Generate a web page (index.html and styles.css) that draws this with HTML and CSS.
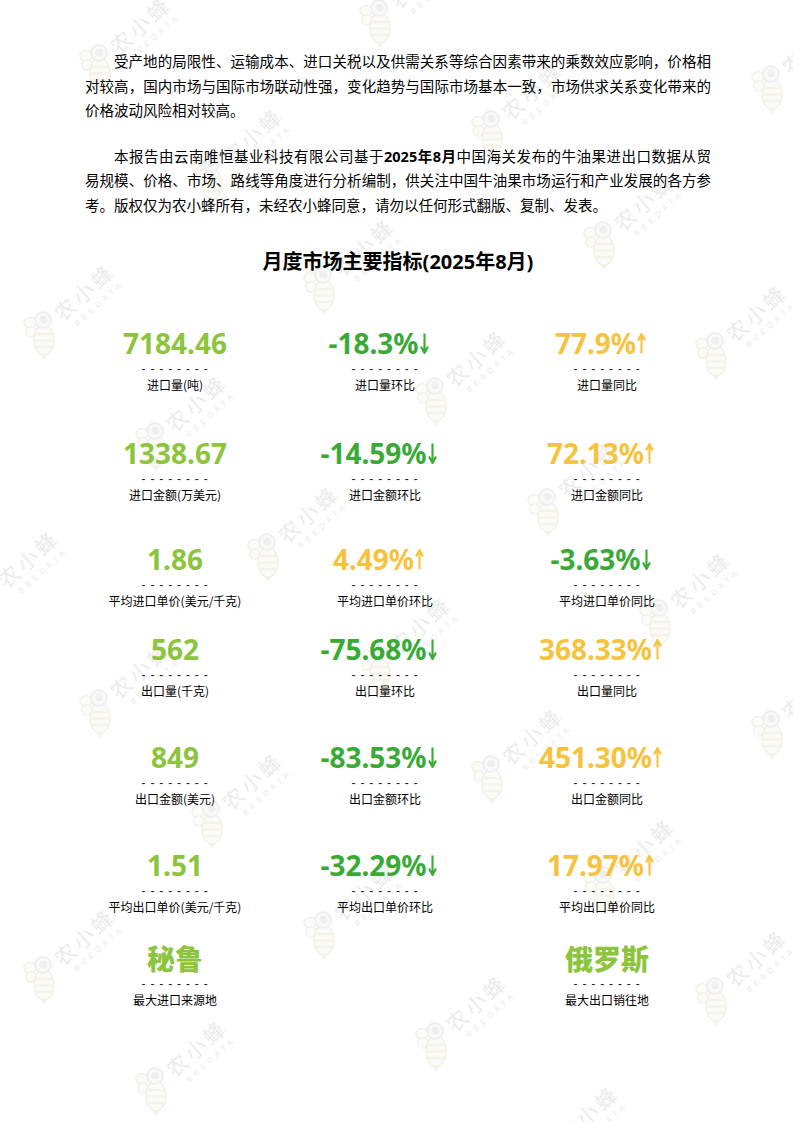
FILE: index.html
```html
<!DOCTYPE html>
<html lang="zh-CN">
<head>
<meta charset="utf-8">
<title>月度市场主要指标</title>
<link rel="stylesheet" href="styles.css">
</head>
<body>
<div class="page">
  <svg class="defs" width="0" height="0" aria-hidden="true">
    <defs>
      <symbol id="bee" viewBox="-20 -12 40 56">
        <ellipse cx="-13" cy="3" rx="6" ry="5.5" fill="#fafaf6" stroke="#efede6" stroke-width="1.5"/>
        <ellipse cx="-12" cy="12" rx="5.5" ry="5" fill="#fafaf6" stroke="#efede6" stroke-width="1.5"/>
        <ellipse cx="1" cy="20" rx="10" ry="15" fill="#fbfaf5" stroke="#f0ece0" stroke-width="1.6"/>
        <path d="M-8 14H10M-9 20.5H11M-8 27H10" stroke="#f3efe2" stroke-width="2.4"/>
        <path d="M-2.5 34.5L1 40L4.5 34.5Z" fill="#f0ece0"/>
        <circle cx="0" cy="0" r="8" fill="#f7f7f7" stroke="#eaeaea" stroke-width="2"/>
        <circle cx="0.5" cy="-0.5" r="3.8" fill="#e9e9e9"/>
      </symbol>
      <symbol id="down" viewBox="0 0 9 21">
        <path d="M4.5 0.5V19.5M1 13.5L4.5 20L8 13.5" fill="none" stroke="currentColor" stroke-width="2.1"/>
      </symbol>
      <symbol id="up" viewBox="0 0 9 21">
        <path d="M4.5 20.5V1.5M1 7.5L4.5 1L8 7.5" fill="none" stroke="currentColor" stroke-width="2.1"/>
      </symbol>
    </defs>
  </svg>

  <div class="watermarks" aria-hidden="true">
    <div class="wm w1"><svg class="bee"><use href="#bee"/></svg><div class="wm-t"><span class="wm-cn">农小蜂</span><span class="wm-en">BEEDATA</span></div></div>
    <div class="wm w2"><svg class="bee"><use href="#bee"/></svg><div class="wm-t"><span class="wm-cn">农小蜂</span><span class="wm-en">BEEDATA</span></div></div>
    <div class="wm w3"><svg class="bee"><use href="#bee"/></svg><div class="wm-t"><span class="wm-cn">农小蜂</span><span class="wm-en">BEEDATA</span></div></div>
    <div class="wm w4"><svg class="bee"><use href="#bee"/></svg><div class="wm-t"><span class="wm-cn">农小蜂</span><span class="wm-en">BEEDATA</span></div></div>
    <div class="wm w5"><svg class="bee"><use href="#bee"/></svg><div class="wm-t"><span class="wm-cn">农小蜂</span><span class="wm-en">BEEDATA</span></div></div>
    <div class="wm w7"><svg class="bee"><use href="#bee"/></svg><div class="wm-t"><span class="wm-cn">农小蜂</span><span class="wm-en">BEEDATA</span></div></div>
    <div class="wm w8"><svg class="bee"><use href="#bee"/></svg><div class="wm-t"><span class="wm-cn">农小蜂</span><span class="wm-en">BEEDATA</span></div></div>
    <div class="wm w9"><svg class="bee"><use href="#bee"/></svg><div class="wm-t"><span class="wm-cn">农小蜂</span><span class="wm-en">BEEDATA</span></div></div>
    <div class="wm w10"><svg class="bee"><use href="#bee"/></svg><div class="wm-t"><span class="wm-cn">农小蜂</span><span class="wm-en">BEEDATA</span></div></div>
    <div class="wm w11"><svg class="bee"><use href="#bee"/></svg><div class="wm-t"><span class="wm-cn">农小蜂</span><span class="wm-en">BEEDATA</span></div></div>
    <div class="wm w12"><svg class="bee"><use href="#bee"/></svg><div class="wm-t"><span class="wm-cn">农小蜂</span><span class="wm-en">BEEDATA</span></div></div>
    <div class="wm w13"><svg class="bee"><use href="#bee"/></svg><div class="wm-t"><span class="wm-cn">农小蜂</span><span class="wm-en">BEEDATA</span></div></div>
    <div class="wm w14"><svg class="bee"><use href="#bee"/></svg><div class="wm-t"><span class="wm-cn">农小蜂</span><span class="wm-en">BEEDATA</span></div></div>
    <div class="wm w15"><svg class="bee"><use href="#bee"/></svg><div class="wm-t"><span class="wm-cn">农小蜂</span><span class="wm-en">BEEDATA</span></div></div>
    <div class="wm w16"><svg class="bee"><use href="#bee"/></svg><div class="wm-t"><span class="wm-cn">农小蜂</span><span class="wm-en">BEEDATA</span></div></div>
    <div class="wm w17"><svg class="bee"><use href="#bee"/></svg><div class="wm-t"><span class="wm-cn">农小蜂</span><span class="wm-en">BEEDATA</span></div></div>
    <div class="wm w18"><svg class="bee"><use href="#bee"/></svg><div class="wm-t"><span class="wm-cn">农小蜂</span><span class="wm-en">BEEDATA</span></div></div>
    <div class="wm w19"><svg class="bee"><use href="#bee"/></svg><div class="wm-t"><span class="wm-cn">农小蜂</span><span class="wm-en">BEEDATA</span></div></div>
    <div class="wm w20"><svg class="bee"><use href="#bee"/></svg><div class="wm-t"><span class="wm-cn">农小蜂</span><span class="wm-en">BEEDATA</span></div></div>
    <div class="wm w21"><svg class="bee"><use href="#bee"/></svg><div class="wm-t"><span class="wm-cn">农小蜂</span><span class="wm-en">BEEDATA</span></div></div>
    <div class="wm w23"><svg class="bee"><use href="#bee"/></svg><div class="wm-t"><span class="wm-cn">农小蜂</span><span class="wm-en">BEEDATA</span></div></div>
    <div class="wm w24"><svg class="bee"><use href="#bee"/></svg><div class="wm-t"><span class="wm-cn">农小蜂</span><span class="wm-en">BEEDATA</span></div></div>
    <div class="wm w25"><svg class="bee"><use href="#bee"/></svg><div class="wm-t"><span class="wm-cn">农小蜂</span><span class="wm-en">BEEDATA</span></div></div>
    <div class="wm w26"><svg class="bee"><use href="#bee"/></svg><div class="wm-t"><span class="wm-cn">农小蜂</span><span class="wm-en">BEEDATA</span></div></div>
    <div class="wm w27"><svg class="bee"><use href="#bee"/></svg><div class="wm-t"><span class="wm-cn">农小蜂</span><span class="wm-en">BEEDATA</span></div></div>
    <div class="wm w28"><svg class="bee"><use href="#bee"/></svg><div class="wm-t"><span class="wm-cn">农小蜂</span><span class="wm-en">BEEDATA</span></div></div>
    <div class="wm w29"><svg class="bee"><use href="#bee"/></svg><div class="wm-t"><span class="wm-cn">农小蜂</span><span class="wm-en">BEEDATA</span></div></div>
  </div>

  <main class="content">
    <p class="para">
      <span class="ln ln-first">受产地的局限性、运输成本、进口关税以及供需关系等综合因素带来的乘数效应影响，价格相</span>
      <span class="ln">对较高，国内市场与国际市场联动性强，变化趋势与国际市场基本一致，市场供求关系变化带来的</span>
      <span class="ln ln-last">价格波动风险相对较高。</span>
    </p>
    <p class="para">
      <span class="ln ln-first">本报告由云南唯恒基业科技有限公司基于<b>2025年8月</b>中国海关发布的牛油果进出口数据从贸</span>
      <span class="ln">易规模、价格、市场、路线等角度进行分析编制，供关注中国牛油果市场运行和产业发展的各方参</span>
      <span class="ln ln-last">考。版权仅为农小蜂所有，未经农小蜂同意，请勿以任何形式翻版、复制、发表。</span>
    </p>

    <h2 class="title">月度市场主要指标(2025年8月)</h2>

    <section class="metrics">
      <div class="row r1">
        <div class="cell"><div class="val lime">7184.46</div><div class="dash">- - - - - - - -</div><div class="lab">进口量(吨)</div></div>
        <div class="cell"><div class="val green">-18.3%<svg class="arrow"><use href="#down"/></svg></div><div class="dash">- - - - - - - -</div><div class="lab">进口量环比</div></div>
        <div class="cell"><div class="val gold">77.9%<svg class="arrow"><use href="#up"/></svg></div><div class="dash">- - - - - - - -</div><div class="lab">进口量同比</div></div>
      </div>
      <div class="row r2">
        <div class="cell"><div class="val lime">1338.67</div><div class="dash">- - - - - - - -</div><div class="lab">进口金额(万美元)</div></div>
        <div class="cell"><div class="val green">-14.59%<svg class="arrow"><use href="#down"/></svg></div><div class="dash">- - - - - - - -</div><div class="lab">进口金额环比</div></div>
        <div class="cell"><div class="val gold">72.13%<svg class="arrow"><use href="#up"/></svg></div><div class="dash">- - - - - - - -</div><div class="lab">进口金额同比</div></div>
      </div>
      <div class="row r3">
        <div class="cell"><div class="val lime">1.86</div><div class="dash">- - - - - - - -</div><div class="lab">平均进口单价(美元/千克)</div></div>
        <div class="cell"><div class="val gold">4.49%<svg class="arrow"><use href="#up"/></svg></div><div class="dash">- - - - - - - -</div><div class="lab">平均进口单价环比</div></div>
        <div class="cell"><div class="val green">-3.63%<svg class="arrow"><use href="#down"/></svg></div><div class="dash">- - - - - - - -</div><div class="lab">平均进口单价同比</div></div>
      </div>
      <div class="row r4">
        <div class="cell"><div class="val lime">562</div><div class="dash">- - - - - - - -</div><div class="lab">出口量(千克)</div></div>
        <div class="cell"><div class="val green">-75.68%<svg class="arrow"><use href="#down"/></svg></div><div class="dash">- - - - - - - -</div><div class="lab">出口量环比</div></div>
        <div class="cell"><div class="val gold">368.33%<svg class="arrow"><use href="#up"/></svg></div><div class="dash">- - - - - - - -</div><div class="lab">出口量同比</div></div>
      </div>
      <div class="row r5">
        <div class="cell"><div class="val lime">849</div><div class="dash">- - - - - - - -</div><div class="lab">出口金额(美元)</div></div>
        <div class="cell"><div class="val green">-83.53%<svg class="arrow"><use href="#down"/></svg></div><div class="dash">- - - - - - - -</div><div class="lab">出口金额环比</div></div>
        <div class="cell"><div class="val gold">451.30%<svg class="arrow"><use href="#up"/></svg></div><div class="dash">- - - - - - - -</div><div class="lab">出口金额同比</div></div>
      </div>
      <div class="row r6">
        <div class="cell"><div class="val lime">1.51</div><div class="dash">- - - - - - - -</div><div class="lab">平均出口单价(美元/千克)</div></div>
        <div class="cell"><div class="val green">-32.29%<svg class="arrow"><use href="#down"/></svg></div><div class="dash">- - - - - - - -</div><div class="lab">平均出口单价环比</div></div>
        <div class="cell"><div class="val gold">17.97%<svg class="arrow"><use href="#up"/></svg></div><div class="dash">- - - - - - - -</div><div class="lab">平均出口单价同比</div></div>
      </div>
      <div class="row r7">
        <div class="cell"><div class="val lime cn">秘鲁</div><div class="dash">- - - - - - - -</div><div class="lab">最大进口来源地</div></div>
        <div class="cell"></div>
        <div class="cell"><div class="val lime cn">俄罗斯</div><div class="dash">- - - - - - - -</div><div class="lab">最大出口销往地</div></div>
      </div>
    </section>
  </main>
</div>
</body>
</html>
```

FILE: styles.css
```css
* { box-sizing: border-box; }

html, body {
  margin: 0;
  padding: 0;
  background: #ffffff;
}

.page {
  position: relative;
  width: 793px;
  height: 1122px;
  overflow: hidden;
  background: #ffffff;
  color: #000000;
  font-family: "Noto Sans", "Noto Sans CJK SC", sans-serif;
}

.defs {
  position: absolute;
  width: 0;
  height: 0;
  overflow: hidden;
}

/* ---------- watermark layer ---------- */
.watermarks {
  position: absolute;
  inset: 0;
  z-index: 0;
  pointer-events: none;
  opacity: 0.72;
}

.wm {
  position: absolute;
  width: 0;
  height: 0;
}

.wm .bee {
  position: absolute;
  left: -20px;
  top: -12px;
  width: 40px;
  height: 56px;
  overflow: visible;
}

.wm-t {
  position: absolute;
  left: 0;
  top: 0;
  transform: rotate(-42deg);
  transform-origin: 0 0;
}

.wm-cn {
  position: absolute;
  left: 13px;
  top: -6.5px;
  font-family: "Noto Sans CJK SC", sans-serif;
  font-size: 21px;
  line-height: 24px;
  letter-spacing: 3.5px;
  color: #e4e4e4;
  white-space: nowrap;
}

.wm-en {
  position: absolute;
  left: 21px;
  top: 20.5px;
  font-family: "Liberation Sans", sans-serif;
  font-size: 8px;
  line-height: 10px;
  letter-spacing: 3.9px;
  color: #e4e4e4;
  white-space: nowrap;
}

.w1  { left: 99px;  top: 53px; }
.w2  { left: 379px; top: 8px; }
.w3  { left: 771px; top: 74px; }
.w4  { left: 211px; top: 164px; }
.w5  { left: 491px; top: 119px; }
.w7  { left: 323px; top: 275px; }
.w8  { left: 603px; top: 230px; }
.w9  { left: 43px;  top: 320px; }
.w10 { left: 435px; top: 386px; }
.w11 { left: 715px; top: 341px; }
.w12 { left: 155px; top: 431px; }
.w13 { left: 547px; top: 497px; }
.w14 { left: 267px; top: 542px; }
.w15 { left: -13px; top: 587px; }
.w16 { left: 659px; top: 608px; }
.w17 { left: 379px; top: 653px; }
.w18 { left: 99px;  top: 698px; }
.w19 { left: 771px; top: 719px; }
.w20 { left: 491px; top: 764px; }
.w21 { left: 211px; top: 809px; }
.w23 { left: 603px; top: 875px; }
.w24 { left: 323px; top: 920px; }
.w25 { left: 43px;  top: 965px; }
.w26 { left: 715px; top: 986px; }
.w27 { left: 435px; top: 1031px; }
.w28 { left: 155px; top: 1076px; }
.w29 { left: 547px; top: 1142px; }

/* ---------- content ---------- */
.content {
  position: relative;
  z-index: 1;
  padding: 49px 82px 0 85px;
}

.para {
  margin: 0;
  font-size: 14.5px;
  line-height: 24.5px;
}

.para + .para {
  margin-top: 21.25px;
}

.ln {
  display: block;
  text-align: justify;
  text-align-last: justify;
}

.ln-first {
  text-indent: 29px;
}

.ln-last {
  text-align-last: left;
}

.para b {
  font-weight: 700;
}

.title {
  margin: 30.75px 0 0;
  text-align: center;
  font-size: 20px;
  line-height: 28px;
  font-weight: 700;
}

.metrics {
  margin-top: 51px;
}

.row {
  display: grid;
  grid-template-columns: 180px 240px 204px;
}

.r2 { margin-top: 43.5px; }
.r3 { margin-top: 39.5px; }
.r4 { margin-top: 23.5px; }
.r5 { margin-top: 41.5px; }
.r6 { margin-top: 41.5px; }
.r7 { margin-top: 26.5px; }

.cell {
  text-align: center;
}

.val {
  font-family: "Noto Sans", "Noto Sans CJK SC", sans-serif;
  font-size: 28px;
  line-height: 32px;
  font-weight: 700;
  white-space: nowrap;
}

.val.cn {
  font-family: "Noto Sans CJK SC", sans-serif;
  font-weight: 900;
}

.lime  { color: #8cc43d; }
.green { color: #3aaa36; }
.gold  { color: #f6c33e; }

.arrow {
  display: inline-block;
  width: 9px;
  height: 21px;
  margin-left: 1px;
  margin-right: 13px;
  vertical-align: baseline;
}

.dash {
  margin-top: 2.5px;
  font-family: "Liberation Sans", sans-serif;
  font-size: 12px;
  line-height: 14px;
  letter-spacing: 0.77px;
  color: #1a1a1a;
  white-space: nowrap;
}

.lab {
  font-family: "Noto Sans CJK SC", sans-serif;
  font-size: 12px;
  line-height: 18px;
  color: #000000;
  white-space: nowrap;
}
```
